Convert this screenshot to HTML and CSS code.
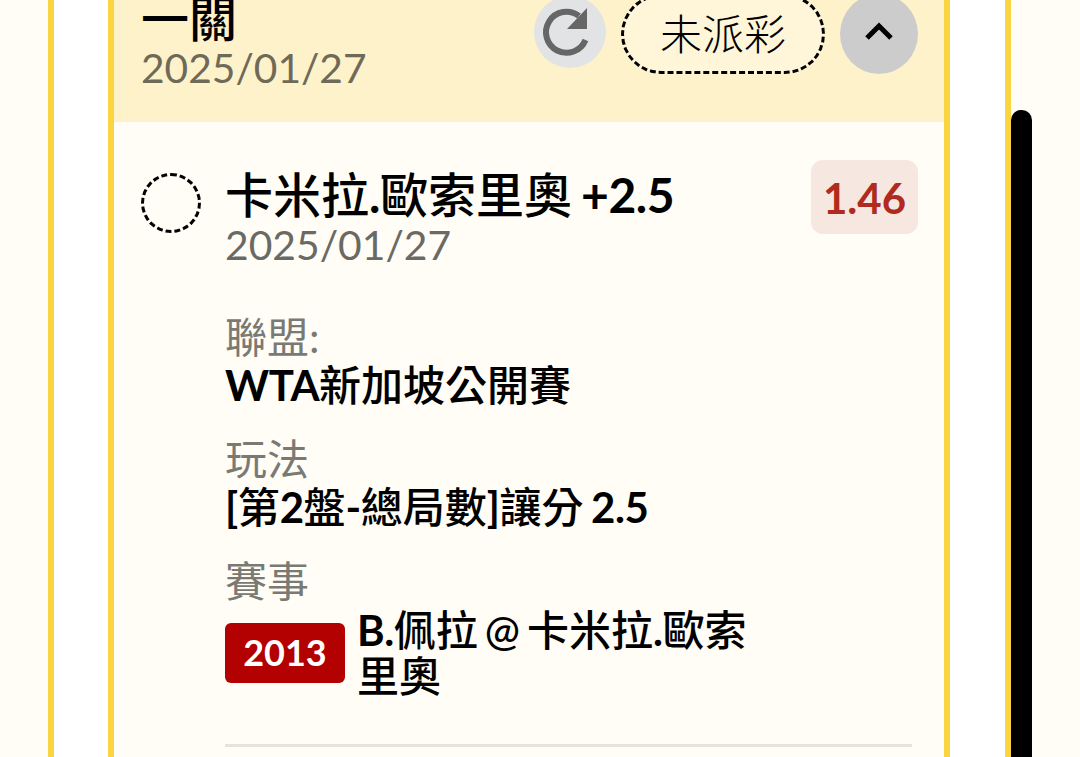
FILE: index.html
```html
<!doctype html>
<html>
<head>
<meta charset="utf-8">
<link rel="stylesheet" href="styles.css">
</head>
<body>
<div class="page">
	<div class="panel">
		<div class="card">
			<div class="head">
				<div class="head-text">
					<div class="head-title">一關</div>
					<div class="head-date">2025/01/27</div>
				</div>
				<div class="head-btns">
					<div class="refresh">
						<svg width="72" height="72" viewBox="0 0 72 72"><path d="M51.5 44A20.5 20.5 0 1 1 45 20" fill="none" stroke="#666" stroke-width="6"/><path d="M53 12v21H33z" fill="#666"/></svg>
					</div>
					<div class="status">未派彩</div>
					<div class="toggle">
						<svg width="32" height="22" viewBox="0 0 32 22"><path d="M4 18 16 6l12 12" fill="none" stroke="#000" stroke-width="5"/></svg>
					</div>
				</div>
			</div>
			<div class="body">
				<div class="pick">
					<div class="radio"></div>
					<div class="pick-main">
						<div class="pick-title">卡米拉<b>.</b>歐索里奧 <b>+2.5</b></div>
						<div class="pick-date">2025/01/27</div>
					</div>
					<div class="odds">1.46</div>
				</div>
				<div class="info">
					<div class="info-item">
						<div class="info-label">聯盟:</div>
						<div class="info-value"><b>WTA</b>新加坡公開賽</div>
					</div>
					<div class="info-item">
						<div class="info-label">玩法</div>
						<div class="info-value"><b>[</b>第<b>2</b>盤<b>-</b>總局數<b>]</b>讓分 <b>2.5</b></div>
					</div>
					<div class="info-item">
						<div class="info-label">賽事</div>
						<div class="match">
							<span class="match-no">2013</span>
							<div class="match-name"><b>B.</b>佩拉 @ 卡米拉<b>.</b>歐索<br>里奧</div>
						</div>
					</div>
				</div>
				<div class="divider"></div>
			</div>
		</div>
	</div>
	<div class="scroll-thumb"></div>
</div>
</body>
</html>
```

FILE: styles.css
```css
* {margin:0; padding:0; box-sizing:border-box;}
html, body {height:100%; overflow:hidden; background:#fffdf6;}
body {font-family:"Lato","Noto Sans CJK TC",sans-serif; color:#000;}
b {font-weight:700; letter-spacing:-.5px;}

.page {position:relative; width:1080px; height:757px; padding-left:48px; overflow:hidden;}
.panel {width:963px; height:757px; padding:0 54px; background:#fff; border:solid #fad541; border-width:0 6px;}
.card {width:842px; height:757px; background:#fffdf6; border:solid #fad541; border-width:0 6px;}

.head {height:122px; padding:0 26px 0 27px; background:#fef2cb; display:flex; justify-content:space-between;}
.head-text {margin-top:-9px;}
.head-title {font-size:48px; font-weight:500; line-height:56px;}
.head-date {font-size:40.7px; line-height:50px; color:#6f6a58; margin-top:-4px;}
.head-btns {display:flex; align-items:flex-start; margin-top:-6px;}
.refresh {width:72px; height:72px; margin-top:2px; border-radius:50%; background:#e2e3e5;}
.refresh svg {display:block;}
.status {width:204px; height:80px; margin-left:15px; border:3px dashed #000; border-radius:40px; font-size:42px; font-weight:300; line-height:74px; text-align:center; background:#fff5d8;}
.toggle {width:78px; height:80px; margin-left:15px; border-radius:50%; background:#cccccc; display:flex; align-items:center; justify-content:center; padding-bottom:6px;}

.body {padding:38px 26px 0 27px;}
.pick {display:flex; align-items:flex-start;}
.radio {width:60px; height:60px; margin-top:13px; border:3px dashed #000; border-radius:50%; flex-shrink:0;}
.pick-main {flex:1; margin:7px 0 0 24px;}
.pick-title {font-size:48px; font-weight:500; line-height:56px; word-spacing:-3px;}
.pick-date {font-size:40.8px; line-height:44px; color:#6a6a64;}
.odds {width:107px; height:74px; border-radius:12px; background:#f6e7e1; color:#b02a20; font-size:42px; font-weight:700; line-height:76px; text-align:center;}

.info {margin:44px 0 0 84px;}
.info-item {margin-bottom:25px;}
.info-label {font-size:42px; line-height:52px; color:#7a7a74;}
.info-value {font-size:42px; font-weight:500; line-height:46px; margin-top:-1px; word-spacing:-3px;}
.match {display:flex; align-items:flex-start;}
.match-no {width:120px; height:60px; margin-top:16px; border-radius:6px; background:#b30000; color:#fff; font-size:36px; font-weight:700; line-height:58px; text-align:center; flex-shrink:0;}
.match-name {width:400px; margin-left:12px; font-size:42px; font-weight:500; line-height:46px; word-spacing:-3.5px;}
.divider {height:3px; margin:45px 6px 0 84px; background:#e6e3da;}

.scroll-thumb {position:absolute; left:1011px; top:110px; width:21px; height:660px; border-radius:10px 10px 0 0; background:#000;}
```
